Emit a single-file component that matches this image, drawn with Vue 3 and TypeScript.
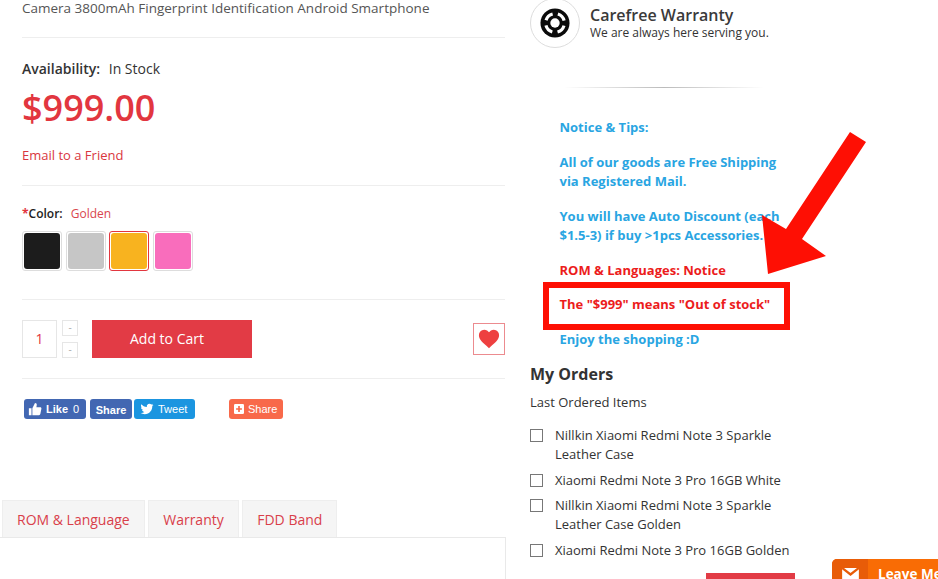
<script setup lang="ts">
const swatches = [
  { color: '#1c1c1c', active: false },
  { color: '#c6c6c6', active: false },
  { color: '#f8b31f', active: true },
  { color: '#f96dbc', active: false },
]

const tabs = ['ROM & Language', 'Warranty', 'FDD Band']

const orders = [
  'Nillkin Xiaomi Redmi Note 3 Sparkle Leather Case',
  'Xiaomi Redmi Note 3 Pro 16GB White',
  'Nillkin Xiaomi Redmi Note 3 Sparkle Leather Case Golden',
  'Xiaomi Redmi Note 3 Pro 16GB Golden',
]
</script>

<template>
  <div class="page">
    <main class="product">
      <p class="title">Camera 3800mAh Fingerprint Identification Android Smartphone</p>

      <section class="stock">
        <p class="availability"><b>Availability:</b> In Stock</p>
        <p class="price">$999.00</p>
        <a class="email">Email to a Friend</a>
      </section>

      <section class="options">
        <p class="color-label"><i>*</i><b>Color:</b> <span>Golden</span></p>
        <div class="swatches">
          <span
            v-for="s in swatches"
            :key="s.color"
            :class="['swatch', { active: s.active }]"
          >
            <span class="chip" :style="{ background: s.color }"></span>
          </span>
        </div>
      </section>

      <section class="buy">
        <div class="qty">1</div>
        <div class="steps">
          <span class="step">-</span>
          <span class="step">-</span>
        </div>
        <button class="cart">Add to Cart</button>
        <span class="wish">
          <svg viewBox="0 0 24 24" width="22" height="22">
            <path fill="#ee4040" d="M12 22C5 16 1 12.500 1 8a6 6 0 0 1 11-3.300A6 6 0 0 1 23 8c0 4.500-4 8-11 14z" />
          </svg>
        </span>
      </section>

      <section class="social">
        <span class="soc fb like">
          <svg viewBox="0 0 16 16" width="14" height="14">
            <path fill="#fff" d="M1 7h3v8H1zM5 7l3-6c1.500 0 2.200 1 2 2.500L9.600 6H14c1 0 1.500.8 1.300 1.700l-1.200 6c-.2.800-.7 1.300-1.500 1.300H5z" />
          </svg>
          Like <em>0</em>
        </span>
        <span class="soc fb share">Share</span>
        <span class="soc tw">
          <svg viewBox="0 0 24 24" width="14" height="14">
            <path fill="#fff" d="M23 5c-.8.400-1.700.600-2.600.700.900-.600 1.600-1.400 2-2.500-.9.500-1.900.900-2.900 1.100A4.600 4.600 0 0 0 11.700 8.500C7.900 8.300 4.500 6.500 2.300 3.700c-1.200 2.100-.6 4.800 1.400 6.100-.7 0-1.400-.2-2-.6 0 2.200 1.500 4.100 3.700 4.600-.7.200-1.400.2-2.100.1.600 1.800 2.300 3.100 4.300 3.200A9.300 9.300 0 0 1 1 19c2 1.300 4.500 2 7 2 8.500 0 13.300-7.200 13-13.600.9-.7 1.500-1.500 2-2.400z" />
          </svg>
          Tweet
        </span>
        <span class="soc plus">
          <svg viewBox="0 0 12 12" width="10" height="10">
            <rect width="12" height="12" rx="1.500" fill="#fff" />
            <path fill="#f8694a" d="M5 2.500h2V5h2.500v2H7v2.500H5V7H2.500V5H5z" />
          </svg>
          Share
        </span>
      </section>

      <nav class="tabs">
        <a v-for="t in tabs" :key="t" class="tab">{{ t }}</a>
      </nav>
      <div class="tab-body"></div>
    </main>

    <aside class="side">
      <div class="warranty">
        <span class="ring">
          <svg viewBox="0 0 32 32" width="30" height="30">
            <circle cx="16" cy="16" r="15.500" fill="#0b0b0b" />
            <circle cx="16" cy="16" r="10" fill="none" stroke="#fff" stroke-width="3.400" stroke-dasharray="10 5.700" stroke-dashoffset="-2.850" />
            <circle cx="16" cy="16" r="5" fill="#fff" />
          </svg>
        </span>
        <div>
          <h3>Carefree Warranty</h3>
          <p>We are always here serving you.</p>
        </div>
      </div>
      <div class="fade-rule"></div>

      <div class="notice">
        <p>Notice &amp; Tips:</p>
        <p>All of our goods are Free Shipping<br />via Registered Mail.</p>
        <p>You will have Auto Discount (each<br />$1.5-3) if buy &gt;1pcs Accessories.</p>
        <p class="red">ROM &amp; Languages: Notice</p>
        <p class="red stock-note">The "$999" means "Out of stock"</p>
        <p>Enjoy the shopping :D</p>
      </div>

      <h2 class="orders-title">My Orders</h2>
      <p class="orders-sub">Last Ordered Items</p>
      <ul class="orders">
        <li v-for="o in orders" :key="o">
          <span class="box"></span>
          <span class="name">{{ o }}</span>
        </li>
      </ul>
      <div class="red-btn"></div>
    </aside>

    <!-- annotation drawn over the shot -->
    <div class="callout"></div>
    <svg class="arrow" width="938" height="579" viewBox="0 0 938 579">
      <polygon fill="#fe0f04" points="850,132 866,142 802,239 826,256 768,274 762,215 786,229" />
    </svg>

    <div class="leave">
      <span class="mail">
        <svg viewBox="0 0 18 14" width="17" height="13">
          <path fill="#fff" d="M0 0h18v14H0z" />
          <path fill="none" stroke="#e85c08" stroke-width="2.500" d="M0 0l9 7 9-7" />
        </svg>
      </span>
      <span class="leave-text">Leave Message</span>
    </div>
  </div>
</template>

<style>
html,
body {
  background: #fff;
}
</style>

<style scoped>
.page {
  position: relative;
  display: flex;
  width: 938px;
  height: 579px;
  overflow: hidden;
  background: #fff;
  font-family: 'Open Sans', sans-serif;
  color: #333;
}

p,
h2,
h3,
ul {
  margin: 0;
  padding: 0;
}

.product {
  width: 506px;
  flex: none;
  display: flex;
  flex-direction: column;
}

.title {
  margin-left: 22px;
  height: 37px;
  font-size: 13.500px;
  line-height: 16px;
  color: #555;
  border-bottom: 1px solid #eee;
  width: 483px;
  box-sizing: content-box;
}

.stock,
.options,
.buy {
  margin-left: 22px;
  width: 483px;
  border-bottom: 1px solid #eee;
}

.stock {
  height: 147px;
}

.availability {
  margin-top: 21px;
  font-size: 14px;
  line-height: 19px;
  color: #333;
}

.availability b {
  font-weight: 600;
  margin-right: 5px;
}

.price {
  margin-top: 5px;
  font-size: 36px;
  line-height: 50px;
  font-weight: 600;
  color: #e2363f;
}

.email {
  display: block;
  margin-top: 13px;
  font-size: 13px;
  line-height: 18px;
  color: #d9363e;
}

.options {
  height: 113px;
}

.color-label {
  margin-top: 19px;
  font-size: 12px;
  line-height: 17px;
  color: #222;
}

.color-label i {
  color: #e2363f;
  font-style: normal;
  font-weight: 700;
}

.color-label b {
  font-weight: 600;
  margin-right: 5px;
}

.color-label span {
  color: #d9464e;
}

.swatches {
  display: flex;
  gap: 3.600px;
  margin-top: 9px;
}

.swatch {
  width: 40px;
  height: 40px;
  box-sizing: border-box;
  padding: 1px;
  border: 1px solid #ddd;
  border-radius: 3px;
}

.swatch.active {
  border-color: #e2363f;
}

.chip {
  display: block;
  width: 100%;
  height: 100%;
  border-radius: 3px;
}

.buy {
  height: 79px;
  display: flex;
  align-items: flex-start;
  padding-top: 20px;
  box-sizing: border-box;
}

.qty {
  width: 35px;
  height: 38px;
  box-sizing: border-box;
  border: 1px solid #e6e6e6;
  font-size: 14px;
  line-height: 36px;
  text-align: center;
  color: #e2363f;
}

.steps {
  display: flex;
  flex-direction: column;
  gap: 6px;
  margin-left: 5px;
}

.step {
  width: 16px;
  height: 16px;
  box-sizing: border-box;
  border: 1px solid #e6e6e6;
  font-size: 10px;
  line-height: 13px;
  text-align: center;
  color: #aaa;
}

.cart {
  width: 160px;
  height: 38px;
  margin-left: 14px;
  border: 0;
  background: #e23b45;
  color: #fff;
  font-family: inherit;
  font-size: 14px;
  padding: 0 10px 2px 0;
}

.wish {
  margin-left: auto;
  margin-top: 3px;
  width: 32px;
  height: 32px;
  box-sizing: border-box;
  border: 1px solid #ec8b8f;
  display: flex;
  align-items: center;
  justify-content: center;
}

.social {
  display: flex;
  margin: 20px 0 0 24px;
  height: 101px;
  align-items: flex-start;
  font-family: 'Liberation Sans', Arial, sans-serif;
}

.soc {
  display: flex;
  align-items: center;
  gap: 4px;
  height: 20px;
  border-radius: 3px;
  color: #fff;
  font-size: 11px;
  box-sizing: border-box;
}

.fb {
  background: #4267b2;
  font-weight: 700;
}

.fb em {
  font-style: normal;
  font-weight: 400;
  margin-left: 1px;
}

.like {
  width: 62px;
  padding-left: 4px;
}

.share {
  width: 42px;
  margin-left: 4px;
  justify-content: center;
  padding-top: 1px;
}

.tw {
  width: 61px;
  margin-left: 2px;
  padding-left: 6px;
  background: #1b95e0;
}

.plus {
  width: 54px;
  margin-left: 34px;
  padding-left: 5px;
  background: #f8694a;
}

.tabs {
  display: flex;
  gap: 3.500px;
  margin-left: 2px;
  height: 37px;
}

.tab {
  padding: 0 14px;
  background: #f5f5f5;
  border: 1px solid #eee;
  border-bottom: 0;
  font-size: 14px;
  line-height: 38px;
  color: #d9404a;
}

.tab-body {
  flex: 1;
  border-top: 1px solid #e9e9e9;
  border-right: 1px solid #e9e9e9;
}

.side {
  flex: 1;
  margin-left: 24px;
  position: relative;
  min-width: 0;
}

.warranty {
  display: flex;
  align-items: center;
  gap: 10px;
  margin-top: -2px;
  height: 50px;
}

.ring {
  width: 50px;
  height: 50px;
  box-sizing: border-box;
  border: 1px solid #ddd;
  border-radius: 50%;
  display: flex;
  align-items: center;
  justify-content: center;
}

.warranty h3 {
  font-size: 16px;
  line-height: 20px;
  font-weight: 600;
  color: #3a3a3a;
}

.warranty p {
  font-size: 12px;
  line-height: 16px;
  color: #333;
}

.fade-rule {
  width: 200px;
  height: 1px;
  margin: 39px 0 0 34px;
  background: linear-gradient(to right, #fff, #bbb 50%, #fff);
}

.notice {
  margin: 30px 0 0 29.500px;
  font-size: 13px;
  line-height: 19px;
  font-weight: 700;
  color: #29a5e2;
}

.notice p + p {
  margin-top: 16px;
}

.notice .stock-note {
  margin-top: 15px;
}

.notice .red {
  color: #ec1c1c;
}

.orders-title {
  margin-top: 14px;
  font-size: 16px;
  line-height: 22px;
  font-weight: 700;
  color: #333;
}

.orders-sub {
  margin-top: 8px;
  font-size: 13px;
  line-height: 18px;
  color: #333;
}

.orders {
  list-style: none;
  margin-top: 15px;
  width: 262px;
}

.orders li {
  display: flex;
  font-size: 13px;
  line-height: 19px;
  color: #333;
  margin-bottom: 6.500px;
}

.box {
  flex: none;
  width: 13px;
  height: 13px;
  margin: 3px 12px 0 0;
  box-sizing: border-box;
  border: 1px solid #777;
}

.red-btn {
  position: absolute;
  left: 176px;
  top: 573px;
  width: 89px;
  height: 30px;
  background: #e23b45;
}

.callout {
  position: absolute;
  left: 543px;
  top: 282px;
  width: 247px;
  height: 48px;
  box-sizing: border-box;
  border: 6px solid #fe0f04;
}

.arrow {
  position: absolute;
  left: 0;
  top: 0;
}

.leave {
  position: absolute;
  left: 832px;
  top: 559px;
  width: 150px;
  height: 40px;
  display: flex;
  border-radius: 5px 0 0 0;
  background: #f96c05;
  overflow: hidden;
}

.mail {
  width: 36px;
  background: #e85c08;
  display: flex;
  justify-content: center;
  padding-top: 9px;
  box-sizing: border-box;
}

.leave-text {
  margin-left: 10px;
  padding-top: 6px;
  font-size: 13.500px;
  font-weight: 700;
  color: #fff;
  white-space: nowrap;
}
</style>
